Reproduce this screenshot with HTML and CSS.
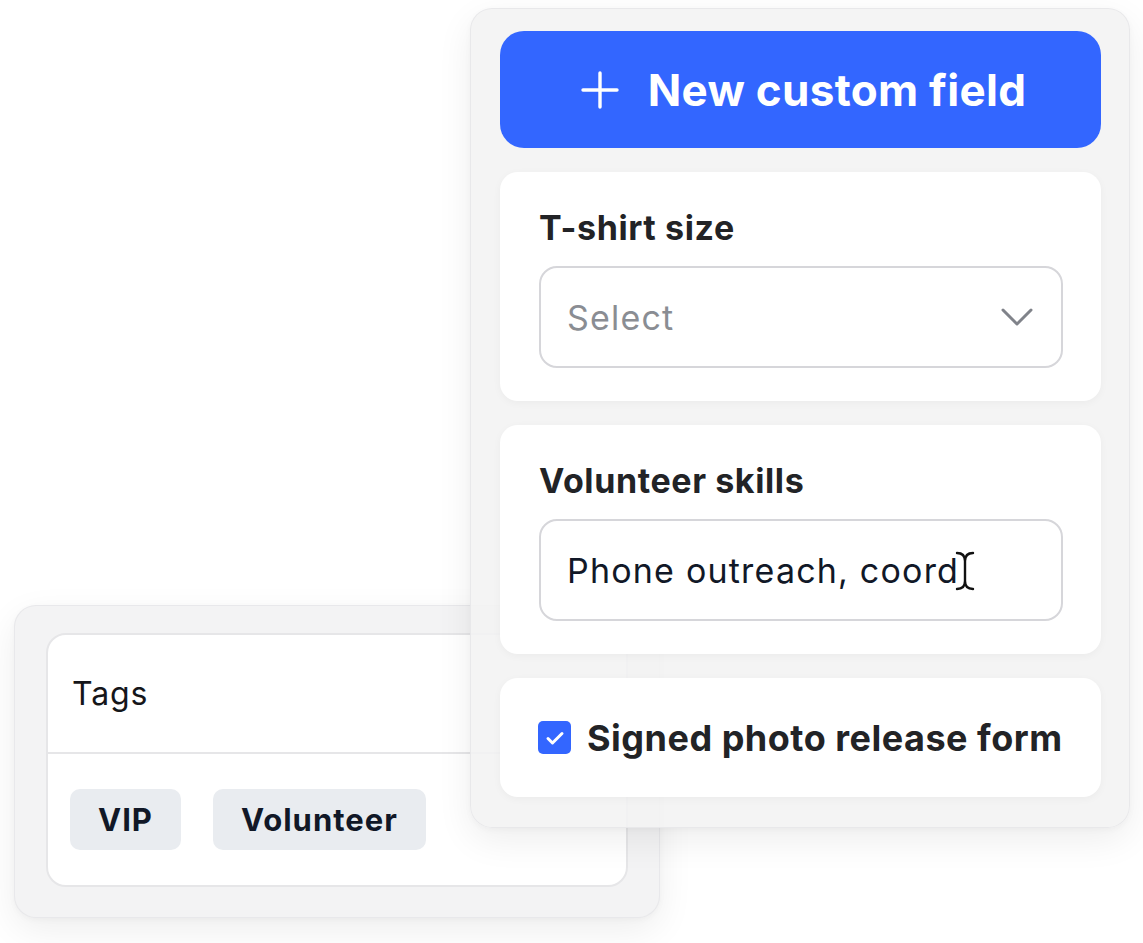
FILE: index.html
```html
<!DOCTYPE html>
<html lang="en">
<head>
  <meta charset="UTF-8" />
  <meta name="viewport" content="width=device-width, initial-scale=1.0"/>
  <title>Custom fields</title>
  <link rel="stylesheet" href="styles.css">
</head>
<body>
  <div class="scene">
    <!-- tags panel sits behind the fields panel -->
    <div class="panel tags-panel">
      <div class="tags-card">
        <div class="tags-head">Tags</div>
        <div class="tags-list">
          <span class="chip">VIP</span>
          <span class="chip">Volunteer</span>
        </div>
      </div>
    </div>

    <div class="panel fields-panel">
      <button class="new-btn">
        <svg class="plus" width="38" height="38" viewBox="0 0 38 38">
          <path d="M19 2v34M2 19h34" stroke="#fff" stroke-width="3.4" stroke-linecap="round"/>
        </svg>
        New custom field
      </button>

      <div class="card">
        <div class="label">T-shirt size</div>
        <div class="field select">
          <span class="placeholder">Select</span>
          <svg class="chev" width="32" height="18" viewBox="0 0 32 18">
            <path d="M2 2l14 14L30 2" fill="none" stroke="#80838a" stroke-width="3" stroke-linecap="round" stroke-linejoin="round"/>
          </svg>
        </div>
      </div>

      <div class="card">
        <div class="label">Volunteer skills</div>
        <div class="field">
          <span class="value">Phone outreach, coord</span>
          <svg class="ibeam" width="22" height="40" viewBox="0 0 22 40">
            <path d="M3 2c5 0 8 3 8 8v20c0 5-3 8-8 8M19 2c-5 0-8 3-8 8v20c0 5 3 8 8 8" fill="none" stroke="#111" stroke-width="2.4" stroke-linecap="round"/>
          </svg>
        </div>
      </div>

      <div class="card check-card">
        <span class="checkbox">
          <svg width="20" height="16" viewBox="0 0 20 16">
            <path d="M3 8.5l4.5 4.5L17 3.5" fill="none" stroke="#fff" stroke-width="3" stroke-linecap="round" stroke-linejoin="round"/>
          </svg>
        </span>
        <span class="check-label">Signed photo release form</span>
      </div>
    </div>
  </div>
</body>
</html>
```

FILE: styles.css
```css
body {
  margin: 0;
  background: #fff;
  font-family: Inter, 'Noto Sans', sans-serif;
  color: #222326;
}

.scene {
  position: relative;
  width: 1143px;
  height: 943px;
  overflow: hidden;
}

.panel {
  position: absolute;
  box-sizing: border-box;
  border-radius: 22px;
  border: 1px solid rgba(225, 225, 228, 0.6);
  box-shadow: 0 12px 36px rgba(0, 0, 0, 0.07), 0 2px 6px rgba(0, 0, 0, 0.03);
}

/* left, behind */
.tags-panel {
  left: 14px;
  top: 605px;
  width: 646px;
  height: 313px;
  padding: 27px 31px 30px;
  background: #f3f3f4;
}

.tags-card {
  background: #fff;
  border: 2px solid #e6e6e8;
  border-radius: 20px;
  height: 100%;
  box-sizing: border-box;
  display: flex;
  flex-direction: column;
}

.tags-head {
  height: 119px;
  box-sizing: border-box;
  padding-left: 24px;
  display: flex;
  align-items: center;
  font-size: 32px;
  letter-spacing: 0.9px;
  color: #15161a;
  border-bottom: 2px solid #e6e6e8;
}

.tags-list {
  display: flex;
  gap: 32px;
  padding: 35px 22px;
}

.chip {
  background: #e9ecf0;
  border-radius: 10px;
  height: 61px;
  padding: 0 28px;
  display: flex;
  align-items: center;
  font-size: 31px;
  letter-spacing: 1px;
  font-weight: 700;
  color: #111827;
}

/* right, on top */
.fields-panel {
  left: 470px;
  top: 8px;
  width: 660px;
  height: 820px;
  padding: 22px 28px 30px 29px;
  background: rgba(242, 242, 243, 0.88);
  display: flex;
  flex-direction: column;
  gap: 24px;
}

.new-btn {
  height: 117px;
  border: none;
  border-radius: 24px;
  background: #3366ff;
  color: #fff;
  font-family: inherit;
  font-size: 44px;
  letter-spacing: 0.3px;
  font-weight: 700;
  display: flex;
  align-items: center;
  justify-content: center;
  gap: 29px;
  padding: 0 0 0 6px;
}

.card {
  background: #fff;
  border-radius: 18px;
  padding: 33px 38px 33px 39px;
  box-shadow: 0 2px 8px rgba(0, 0, 0, 0.04);
}

.label {
  height: 44px;
  display: flex;
  align-items: center;
  font-size: 34px;
  letter-spacing: 0.6px;
  font-weight: 700;
  margin-bottom: 17px;
}

.field {
  height: 102px;
  box-sizing: border-box;
  border: 2px solid #d6d6da;
  border-radius: 18px;
  padding: 0 28px 0 26px;
  display: flex;
  align-items: center;
  font-size: 34px;
  letter-spacing: 1.2px;
}

.select {
  justify-content: space-between;
}

.placeholder {
  color: #8a8d93;
}

.value {
  color: #111827;
}

.ibeam {
  margin-left: -5px;
  margin-top: 2px;
}

.check-card {
  height: 119px;
  box-sizing: border-box;
  padding: 0 38px;
  display: flex;
  align-items: center;
  gap: 16px;
}

.checkbox {
  width: 33px;
  height: 33px;
  border-radius: 5px;
  background: #3366ff;
  display: flex;
  align-items: center;
  justify-content: center;
}

.check-label {
  font-size: 36px;
  letter-spacing: 0.5px;
  font-weight: 700;
}
```
